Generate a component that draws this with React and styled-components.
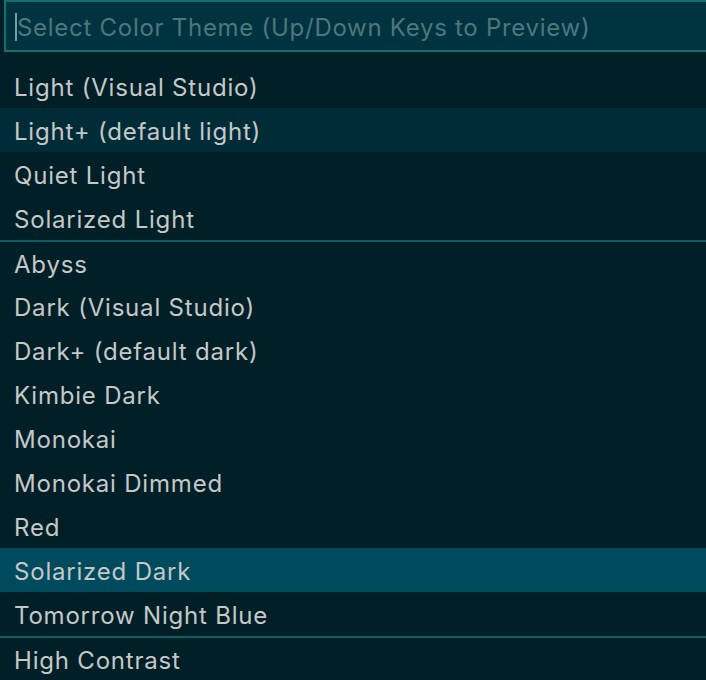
import React from "react";
import styled, { createGlobalStyle } from "styled-components";

const Global = createGlobalStyle`
  html, body { margin: 0; padding: 0; background: #001f27; }
  body { font-family: Inter, "Noto Sans", sans-serif; -webkit-font-smoothing: antialiased; }
`;

const Panel = styled.div`
  width: 706px;
  height: 680px;
  overflow: hidden;
  background: #001f27;
  display: flex;
  flex-direction: column;
`;

const InputWrap = styled.div`
  margin-left: 4px;
  height: 52px;
  box-sizing: border-box;
  width: 720px;
  border: 2px solid #157069;
  background: #003340;
  display: flex;
  align-items: center;
  padding-left: 9px;
  padding-top: 3px;
`;

const Caret = styled.span`
  width: 2px;
  height: 28px;
  background: #7f9a9e;
  margin-top: -2px;
`;

const Placeholder = styled.span`
  font-size: 24px;
  letter-spacing: 0.72px;
  color: #4e777c;
  white-space: nowrap;
`;

const List = styled.div`
  margin-top: 12px;
  display: flex;
  flex-direction: column;
`;

const Row = styled.div`
  height: 44px;
  box-sizing: border-box;
  display: flex;
  align-items: center;
  padding-left: 14px;
  padding-top: 2px;
  font-size: 24px;
  letter-spacing: 0.8px;
  color: #c6c8c8;
  white-space: nowrap;
  background: ${(p) => (p.$selected ? "#004a5e" : p.$hover ? "#002c38" : "transparent")};
  border-top: ${(p) => (p.$separator ? "2px solid #0b5f60" : "none")};
`;

const groups = [
  ["Light (Visual Studio)", "Light+ (default light)", "Quiet Light", "Solarized Light"],
  [
    "Abyss",
    "Dark (Visual Studio)",
    "Dark+ (default dark)",
    "Kimbie Dark",
    "Monokai",
    "Monokai Dimmed",
    "Red",
    "Solarized Dark",
    "Tomorrow Night Blue",
  ],
  ["High Contrast"],
];

export default function App() {
  return (
    <>
      <Global />
      <Panel>
        <InputWrap>
          <Caret />
          <Placeholder>Select Color Theme (Up/Down Keys to Preview)</Placeholder>
        </InputWrap>
        <List>
          {groups.map((g, gi) =>
            g.map((name, i) => (
              <Row
                key={name}
                $separator={gi > 0 && i === 0}
                $hover={name === "Light+ (default light)"}
                $selected={name === "Solarized Dark"}
              >
                {name}
              </Row>
            ))
          )}
        </List>
      </Panel>
    </>
  );
}
